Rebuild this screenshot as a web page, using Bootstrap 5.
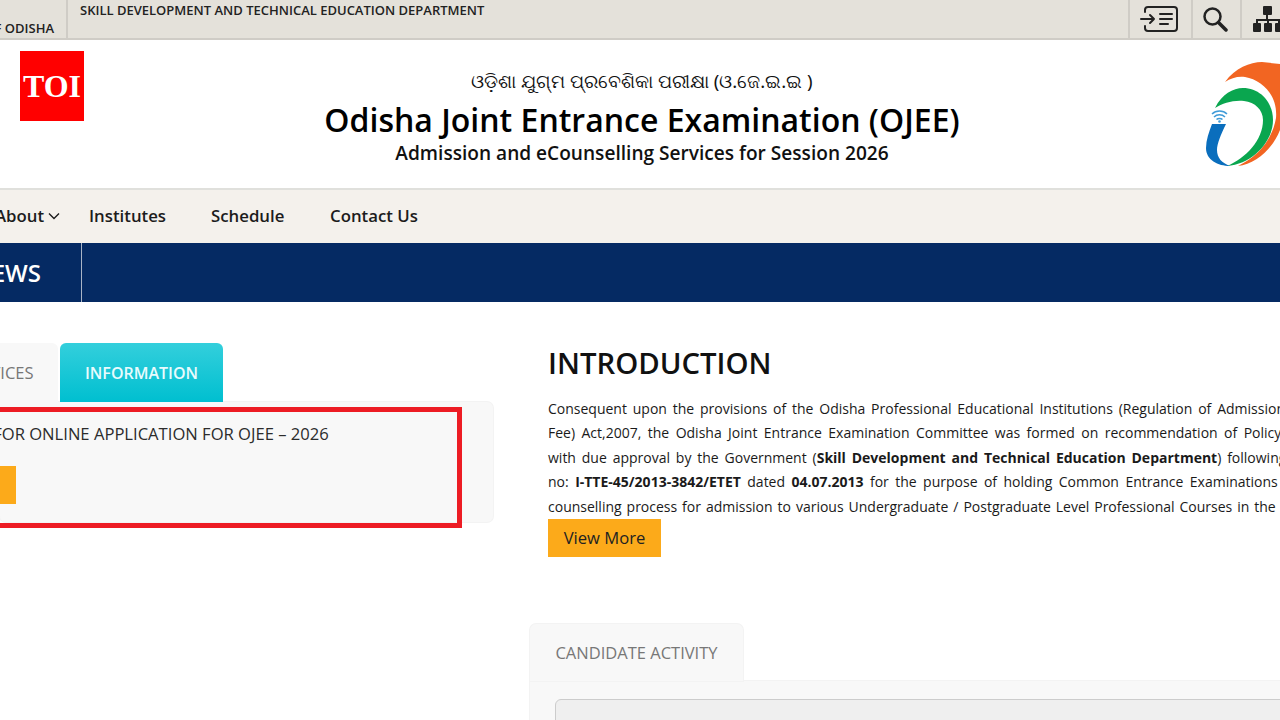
<!DOCTYPE html>
<html lang="en">
<head>
    <meta charset="UTF-8">
    <meta name="viewport" content="width=device-width, initial-scale=1.0">
    <title>Odisha Joint Entrance Examination (OJEE)</title>
    <link href="https://cdn.jsdelivr.net/npm/bootstrap@5.3.0/dist/css/bootstrap.min.css" rel="stylesheet">
    <style>
        html, body { height: 720px; overflow: hidden; }
        body { font-family: "Open Sans", "Noto Sans", sans-serif; color: #111; background: #fff; }
        .page-frame { width: 1280px; height: 720px; overflow: hidden; }

        .top-strip { height: 40px; background: #e4e1da; border-bottom: 2px solid #cfccc6; color: #222; font-size: 13px; font-weight: 600; }
        .govt-cell { width: 68px; height: 38px; border-right: 2px solid #cfccc6; padding: 19px 12px 0 0; white-space: nowrap; }
        .dept-cell { padding: 2px 0 0 12px; line-height: 16px; white-space: nowrap; }
        .tool-cell { height: 38px; border-left: 2px solid #cfccc6; }
        .tool-read { width: 63px; padding-right: 1px; }
        .tool-find { width: 49px; padding-right: 4px; }
        .tool-map { width: 40px; overflow: hidden; justify-content: flex-start !important; padding-left: 11px; }

        .brand-head { height: 148px; }
        .toi-logo { width: 64px; height: 70px; margin: 11px 0 0 20px; background: #f00; color: #fff; font-family: "Liberation Serif", serif; font-weight: 700; font-size: 32px; line-height: 70px; text-align: center; }
        .brand-text { width: 700px; margin-left: 208px; padding-top: 26px; text-align: center; }
        .odia-line { font-size: 18.6px; line-height: 30px; font-family: "Noto Sans", "DejaVu Sans", sans-serif; }
        .exam-title { font-size: 32px; font-weight: 600; line-height: 42px; margin: 3px 0 0; color: #000; }
        .exam-sub { font-size: 19.1px; font-weight: 600; line-height: 24px; margin: 0; }
        .di-logo { margin: 20px 0 0 auto; }

        .main-menu { height: 55px; background: #f4f1ec; border-top: 2px solid #e0e0dc; font-size: 16.8px; font-weight: 600; }
        .main-menu .nav-link { color: #1c1c1c; padding: 0; line-height: 51px; white-space: nowrap; }
        .menu-about { margin-left: -5px; width: 94px; }
        .menu-institutes { width: 122px; }
        .menu-schedule { width: 119px; }

        .news-bar { height: 59px; background: #052a63; color: #fff; }
        .news-label { width: 82px; height: 59px; border-right: 1px solid #a9b4c6; font-size: 24px; font-weight: 600; line-height: 59px; text-align: right; padding-right: 40px; white-space: nowrap; }

        .content-row { padding-top: 41px; }
        .left-side { width: 493px; flex: none; position: relative; }
        .right-side { width: 787px; flex: none; margin-left: 37px; }

        .tab-strip { border: 0; flex-wrap: nowrap; }
        .tab-strip .nav-link { height: 59px; line-height: 59px; padding: 0 25px; font-size: 16.5px; color: #777; background: #f8f8f8; border: 0; border-radius: 6px 6px 0 0; white-space: nowrap; }
        .tab-strip .nav-link.active { color: #e8fbfd; font-size: 16px; font-weight: 600; line-height: 60px; background: linear-gradient(#33cfdc, #00bfd0); }
        .tab-notices { margin-left: -59px; width: 117px; margin-right: 2px; }
        .tab-info { width: 163px; text-align: center; padding: 0 !important; }
        .info-panel { height: 120px; background: #f8f8f8; border-radius: 0 6px 6px 6px; padding: 19px 0 0 0; box-shadow: 0 0 0 1px #f3f3f3; }
        .info-line { margin: 0 0 19px -70px; font-size: 16.6px; line-height: 26px; color: #2c2c2c; white-space: nowrap; }
        .orange-btn { background: #fcaa1a; border: 0; border-radius: 0; color: #222; font-size: 16.6px; height: 38px; padding: 0; }
        .cut-btn { margin-left: -97px; width: 113px; display: block; }
        .red-mark { position: absolute; left: -20px; top: 64px; width: 482px; height: 121px; border: 5px solid #ed1c24; pointer-events: none; }

        .intro-block { padding-left: 18px; }
        .intro-title { font-size: 29.3px; font-weight: 600; line-height: 40px; margin: 0 0 14px; color: #111; }
        .intro-line { font-size: 14px; line-height: 24.4px; white-space: nowrap; color: #1a1a1a; }
        .spread-a { word-spacing: 2.2px; }
        .spread-b { word-spacing: 2.8px; }
        .spread-c { word-spacing: 1.3px; }
        .intro-block .orange-btn { width: 113px; }

        .activity-wrap { margin-top: 67px; }
        .activity-tab { width: 213px; height: 57px; background: #f8f8f8; border-radius: 6px 6px 0 0; box-shadow: 0 0 0 1px #f3f3f3; color: #777; font-size: 16.5px; line-height: 57px; text-align: center; position: relative; }
        .activity-panel { background: #f8f8f8; padding: 18px 0 0 25px; height: 60px; box-shadow: 0 0 0 1px #f3f3f3; }
        .activity-box { height: 60px; background: #efefef; border: 1px solid #ccc; border-radius: 6px 0 0 0; }
    </style>
</head>
<body>
    <div class="page-frame">
        <!-- Government strip -->
        <div class="top-strip d-flex">
            <div class="govt-cell d-flex justify-content-end">F ODISHA</div>
            <div class="dept-cell">SKILL DEVELOPMENT AND TECHNICAL EDUCATION DEPARTMENT</div>
            <div class="tool-cell tool-read ms-auto d-flex align-items-center justify-content-center">
                <svg width="40" height="26" viewBox="0 0 40 26" fill="none" stroke="#222" stroke-width="2" stroke-linecap="round" stroke-linejoin="round">
                    <path d="M5 6V4a3 3 0 0 1 3-3h26a3 3 0 0 1 3 3v18a3 3 0 0 1-3 3H8a3 3 0 0 1-3-3v-2"/>
                    <path d="M1 13h13M10 9l4 4-4 4M20 8h12M20 13h12M20 18h8"/>
                </svg>
            </div>
            <div class="tool-cell tool-find d-flex align-items-center justify-content-center">
                <svg width="26" height="26" viewBox="0 0 26 26" fill="none" stroke="#222" stroke-linecap="round">
                    <circle cx="10.500" cy="10.500" r="8" stroke-width="2.500"/>
                    <path d="M16.500 16.500L24 24" stroke-width="3.500"/>
                </svg>
            </div>
            <div class="tool-cell tool-map d-flex align-items-center justify-content-center">
                <svg class="flex-shrink-0" width="30" height="26" viewBox="0 0 30 26" fill="#222">
                    <rect x="10" y="0" width="9" height="9" rx="1"/>
                    <rect x="0" y="17" width="8" height="9" rx="1"/>
                    <rect x="11" y="17" width="8" height="9" rx="1"/>
                    <rect x="22" y="17" width="8" height="9" rx="1"/>
                    <path d="M14 9v5M4 17v-3h22v3M15 14v3" fill="none" stroke="#222" stroke-width="2"/>
                </svg>
            </div>
        </div>

        <!-- Brand header -->
        <div class="brand-head d-flex">
            <div class="toi-logo flex-shrink-0">TOI</div>
            <div class="brand-text flex-shrink-0">
                <div class="odia-line">ଓଡ଼ିଶା ଯୁଗ୍ମ ପ୍ରବେଶିକା ପରୀକ୍ଷା (ଓ.ଜେ.ଇ.ଇ )</div>
                <h1 class="exam-title">Odisha Joint Entrance Examination (OJEE)</h1>
                <p class="exam-sub">Admission and eCounselling Services for Session 2026</p>
            </div>
            <svg class="di-logo flex-shrink-0" width="80" height="110" viewBox="0 0 80 110">
                <path fill="#f26522" d="M25 22C35 8 50 2 62 2L80 4V70C72 90 55 104 38 106C55 98 72 82 76 58C78 35 62 20 45 17C38 16 31 18 25 22Z"/>
                <path fill="#0aa64f" d="M15 48C22 34 33 28 43 28C60 28 73 42 73 60C73 82 52 104 27 106C46 98 63 80 63 60C63 50 55 42 44 41C33 40 23 43 15 48Z"/>
                <path fill="#0a6ebd" d="M12 64L26 64C21 74 17 84 17 90C17 98 22 103 30 106C18 106 6 100 6 88C6 80 9 72 12 64Z"/>
                <g fill="none" stroke="#3f9bd8" stroke-width="1.500">
                    <path d="M12 54C16 50 23 50 27 54M14 57C17 54 22 54 25 57M16.500 59.500C18 58 21 58 22.500 59.500"/>
                </g>
                <circle cx="19.500" cy="61.500" r="1.300" fill="#3f9bd8"/>
            </svg>
        </div>

        <!-- Main menu -->
        <nav class="main-menu">
            <ul class="nav flex-nowrap">
                <li class="nav-item menu-about">
                    <a class="nav-link d-flex align-items-center" href="#">About
                        <svg class="ms-1" width="12" height="8" viewBox="0 0 12 8" fill="none" stroke="#1c1c1c" stroke-width="1.400"><path d="M1 1.500l5 5 5-5"/></svg>
                    </a>
                </li>
                <li class="nav-item menu-institutes"><a class="nav-link" href="#">Institutes</a></li>
                <li class="nav-item menu-schedule"><a class="nav-link" href="#">Schedule</a></li>
                <li class="nav-item"><a class="nav-link" href="#">Contact Us</a></li>
            </ul>
        </nav>

        <!-- News bar -->
        <div class="news-bar d-flex">
            <div class="news-label d-flex justify-content-end">EWS</div>
        </div>

        <div class="content-row d-flex">
            <!-- Notices / information tabs -->
            <div class="left-side">
                <ul class="nav tab-strip">
                    <li class="nav-item"><a class="nav-link tab-notices" href="#">NOTICES</a></li>
                    <li class="nav-item"><a class="nav-link active tab-info" href="#">INFORMATION</a></li>
                </ul>
                <div class="info-panel">
                    <p class="info-line">NOTICE FOR ONLINE APPLICATION FOR OJEE – 2026</p>
                    <button class="btn orange-btn cut-btn">View</button>
                </div>
                <div class="red-mark"></div>
            </div>

            <div class="right-side">
                <div class="intro-block">
                    <h2 class="intro-title">INTRODUCTION</h2>
                    <div class="intro-copy">
                        <div class="intro-line spread-a">Consequent upon the provisions of the Odisha Professional Educational Institutions (Regulation of Admission and Fixation of</div>
                        <div class="intro-line spread-b">Fee) Act,2007, the Odisha Joint Entrance Examination Committee was formed on recommendation of Policy Planning Body</div>
                        <div class="intro-line spread-a">with due approval by the Government (<strong>Skill Development and Technical Education Department</strong>) following notification</div>
                        <div class="intro-line spread-b">no: <strong>I-TTE-45/2013-3842/ETET</strong> dated <strong>04.07.2013</strong> for the purpose of holding Common Entrance Examinations and</div>
                        <div class="intro-line spread-c">counselling process for admission to various Undergraduate / Postgraduate Level Professional Courses in the State of</div>
                    </div>
                    <button class="btn orange-btn">View More</button>
                </div>

                <div class="activity-wrap">
                    <div class="activity-tab">CANDIDATE ACTIVITY</div>
                    <div class="activity-panel">
                        <div class="activity-box"></div>
                    </div>
                </div>
            </div>
        </div>
    </div>
</body>
</html>
